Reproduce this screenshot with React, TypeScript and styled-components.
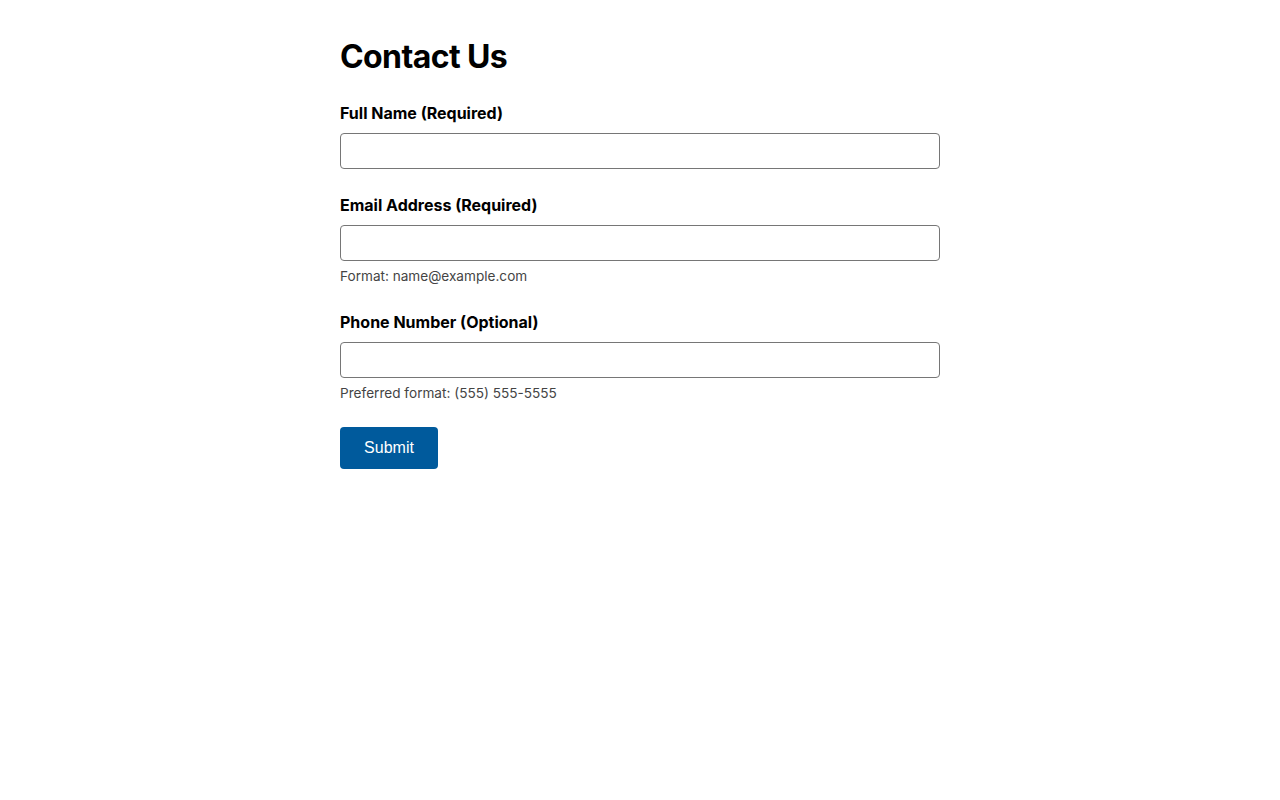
import styled, { createGlobalStyle } from "styled-components";

const GlobalStyle = createGlobalStyle`
  body {
    margin: 0;
    background: #ffffff;
    font-family: Inter, "Liberation Sans", sans-serif;
    color: #000000;
  }
`;

const Page = styled.main`
  max-width: 600px;
  margin: 0 auto;
  padding: 37px 0 0;
`;

const Title = styled.h1`
  font-size: 32px;
  font-weight: 700;
  line-height: 40px;
  margin: 0 0 24px;
  letter-spacing: -0.6px;
`;

const Form = styled.form`
  display: flex;
  flex-direction: column;
`;

const Field = styled.div`
  display: flex;
  flex-direction: column;
  margin-bottom: 24px;
`;

const Label = styled.label`
  font-size: 16px;
  font-weight: 700;
  line-height: 24px;
  margin-bottom: 8px;
`;

const Input = styled.input`
  box-sizing: border-box;
  width: 100%;
  height: 36px;
  padding: 6px 10px;
  font-size: 16px;
  font-family: inherit;
  border: 1px solid #767676;
  border-radius: 4px;
  background: #ffffff;
  outline: none;
`;

const Hint = styled.span`
  font-size: 13.6px;
  line-height: 20px;
  color: #444444;
  margin-top: 5px;
`;

const SubmitButton = styled.button`
  align-self: flex-start;
  width: 98px;
  height: 42px;
  border: none;
  border-radius: 4px;
  background: #005a9c;
  color: #ffffff;
  font-family: "Liberation Sans", Arial, sans-serif;
  font-size: 16px;
  cursor: pointer;
`;

const App = () => {
  return (
    <>
      <GlobalStyle />
      <Page>
        <Title>Contact Us</Title>
        <Form onSubmit={(e) => e.preventDefault()}>
          <Field>
            <Label htmlFor="name">Full Name (Required)</Label>
            <Input id="name" type="text" />
          </Field>
          <Field>
            <Label htmlFor="email">Email Address (Required)</Label>
            <Input id="email" type="email" />
            <Hint>Format: name@example.com</Hint>
          </Field>
          <Field>
            <Label htmlFor="phone">Phone Number (Optional)</Label>
            <Input id="phone" type="tel" />
            <Hint>Preferred format: (555) 555-5555</Hint>
          </Field>
          <SubmitButton type="submit">Submit</SubmitButton>
        </Form>
      </Page>
    </>
  );
};

export default App;
